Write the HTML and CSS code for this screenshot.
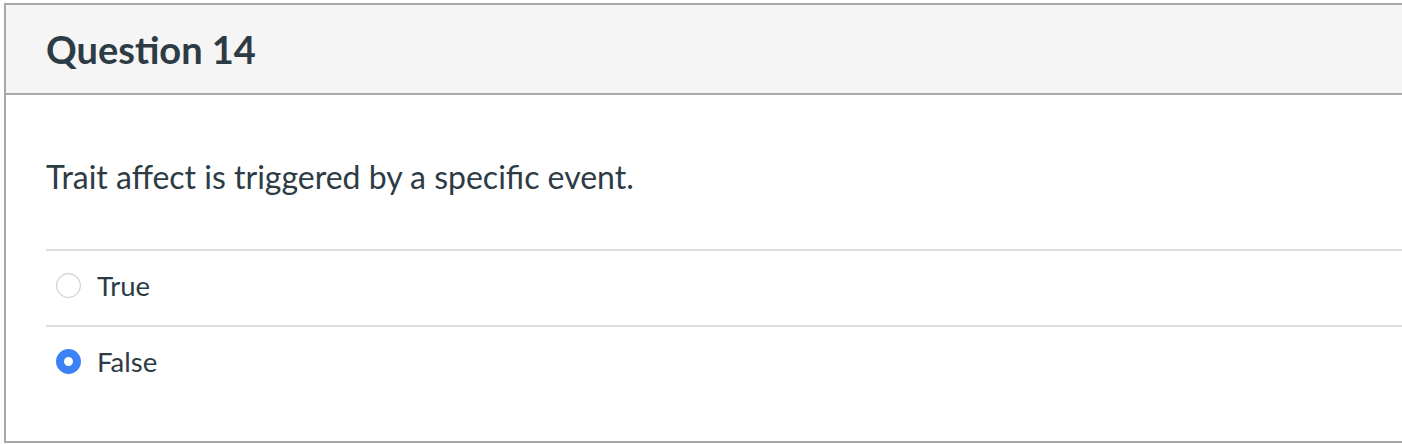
FILE: index.html
```html
<!DOCTYPE html>
<html>
<head>
<meta charset="utf-8">
<link rel="stylesheet" href="styles.css">
</head>
<body>
<div class="question">
  <div class="header"><h2 class="title">Question 14</h2></div>
  <div class="content">
    <p class="text">Trait affect is triggered by a specific event.</p>
    <div class="answers">
      <label class="answer"><span class="radio"></span><span class="label">True</span></label>
      <label class="answer"><span class="radio checked"></span><span class="label">False</span></label>
    </div>
  </div>
</div>
</body>
</html>
```
FILE: styles.css
```css
html, body { margin: 0; padding: 0; background: #fff; }
body { font-family: Lato, "Noto Sans", sans-serif; color: #2d3b45; padding: 3px 0 0 4px; overflow: hidden; }
.question { border: 2px solid #a8a8a8; border-right: none; height: 440px; box-sizing: border-box; }
.header { background: #f5f5f5; border-bottom: 2px solid #a8a8a8; height: 90px; box-sizing: border-box; display: flex; align-items: center; padding-left: 40px; }
.title { margin: 0; font-size: 38px; font-weight: 700; letter-spacing: 0; }
.content { padding: 0 0 0 40px; }
.text { margin: 0; padding-top: 64px; height: 90px; font-size: 32px; line-height: 36px; box-sizing: content-box; }
.answers { border-top: 2px solid #dcdcdc; margin-top: 0; }
.answer { display: flex; align-items: center; height: 69px; padding-bottom: 5px; border-bottom: 2px solid #dcdcdc; font-size: 27.5px; }
.answer:last-child { border-bottom: none; }
.radio { width: 25px; height: 25px; border-radius: 50%; border: 1px solid #c8c8c8; background: #fff; box-sizing: border-box; margin-left: 10px; margin-right: 16px; box-shadow: inset 0 1px 2px rgba(0,0,0,0.06); }
.radio.checked { border: 8px solid #3b82f6; background: #fff; box-shadow: none; }
```
